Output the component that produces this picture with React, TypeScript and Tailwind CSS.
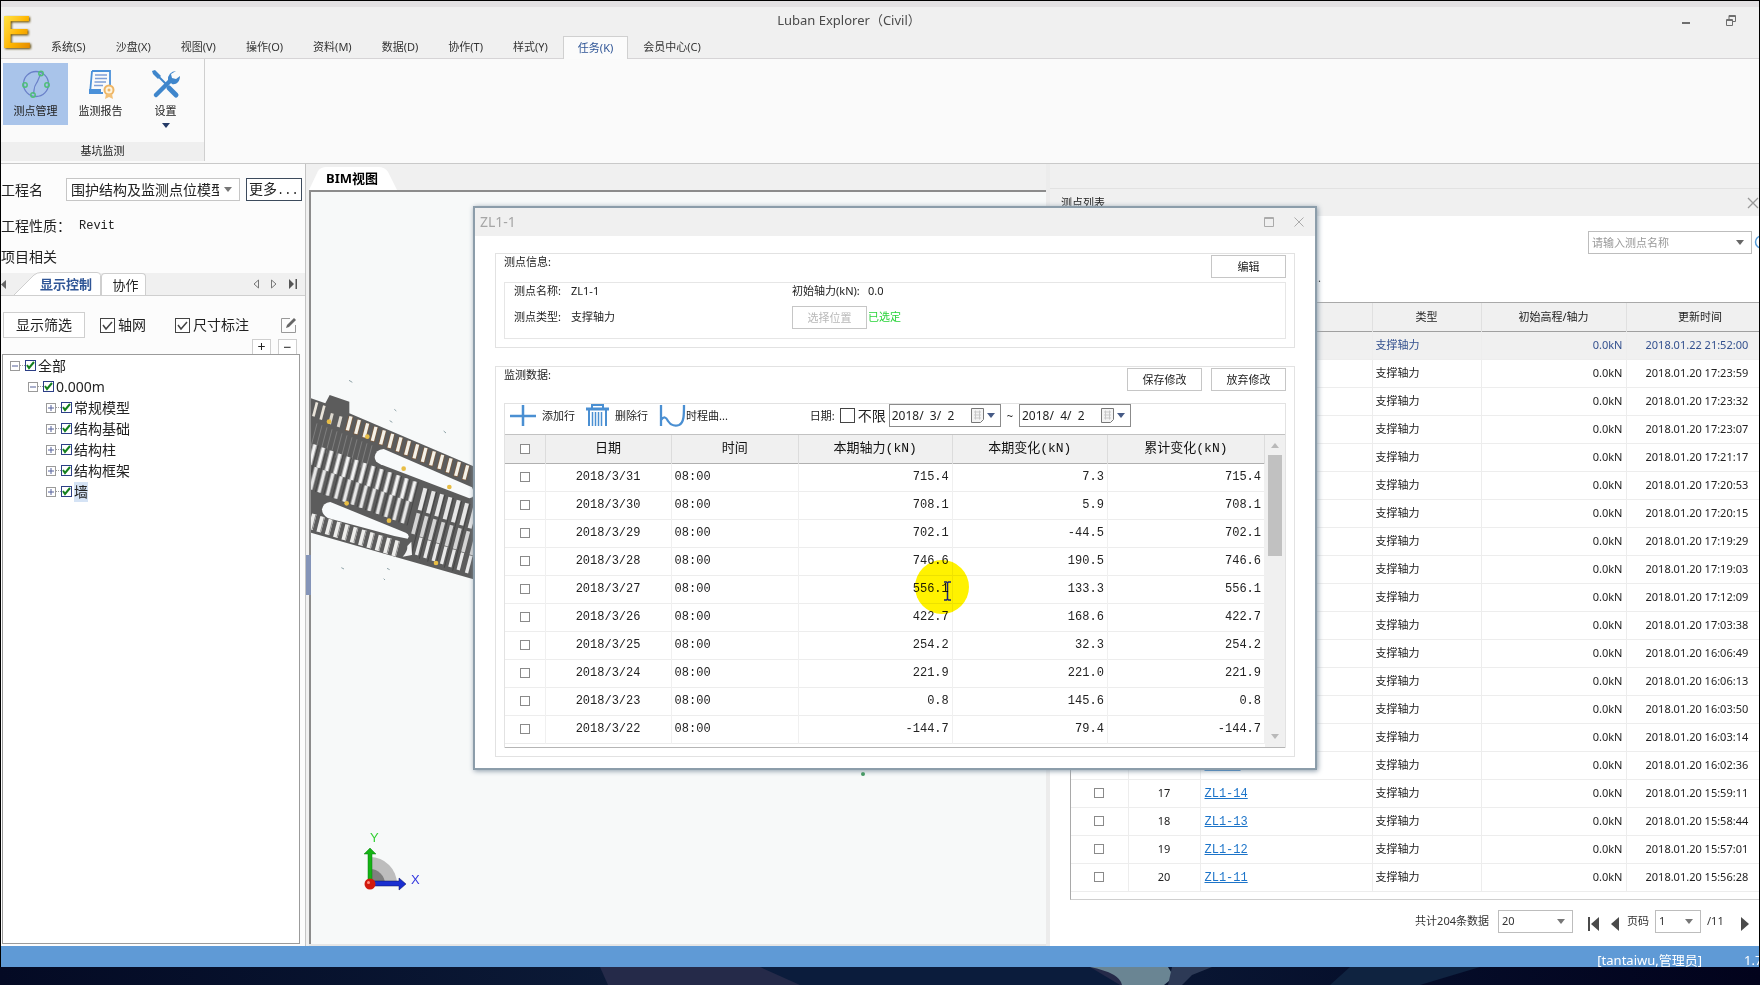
import { useState } from "react";
import type { ReactNode } from "react";

const UI_FONT = "font-['Noto_Sans','Noto_Sans_CJK_SC',sans-serif]";
const SONG_FONT = "font-['Liberation_Mono','Noto_Sans_CJK_SC',monospace]";

const MENU_ITEMS = [
  "系统(S)",
  "沙盘(X)",
  "视图(V)",
  "操作(O)",
  "资料(M)",
  "数据(D)",
  "协作(T)",
  "样式(Y)",
  "任务(K)",
  "会员中心(C)",
];

const TREE_LEAVES = ["常规模型", "结构基础", "结构柱", "结构框架", "墙"];

const READINGS = [
  ["2018/3/31", "08:00", "715.4", "7.3", "715.4"],
  ["2018/3/30", "08:00", "708.1", "5.9", "708.1"],
  ["2018/3/29", "08:00", "702.1", "-44.5", "702.1"],
  ["2018/3/28", "08:00", "746.6", "190.5", "746.6"],
  ["2018/3/27", "08:00", "556.1", "133.3", "556.1"],
  ["2018/3/26", "08:00", "422.7", "168.6", "422.7"],
  ["2018/3/25", "08:00", "254.2", "32.3", "254.2"],
  ["2018/3/24", "08:00", "221.9", "221.0", "221.9"],
  ["2018/3/23", "08:00", "0.8", "145.6", "0.8"],
  ["2018/3/22", "08:00", "-144.7", "79.4", "-144.7"],
];

const POINTS = [
  { name: "ZL1-1", updated: "2018.01.22 21:52:00" },
  { name: "ZL3-6", updated: "2018.01.20 17:23:59" },
  { name: "ZL3-5", updated: "2018.01.20 17:23:32" },
  { name: "ZL3-4", updated: "2018.01.20 17:23:07" },
  { name: "ZL3-3", updated: "2018.01.20 17:21:17" },
  { name: "ZL3-2", updated: "2018.01.20 17:20:53" },
  { name: "ZL3-1", updated: "2018.01.20 17:20:15" },
  { name: "ZL2-6", updated: "2018.01.20 17:19:29" },
  { name: "ZL2-5", updated: "2018.01.20 17:19:03" },
  { name: "ZL2-4", updated: "2018.01.20 17:12:09" },
  { name: "ZL2-3", updated: "2018.01.20 17:03:38" },
  { name: "ZL2-2", updated: "2018.01.20 16:06:49" },
  { name: "ZL2-1", updated: "2018.01.20 16:06:13" },
  { name: "ZL1-4", updated: "2018.01.20 16:03:50" },
  { name: "ZL1-3", updated: "2018.01.20 16:03:14" },
  { name: "ZL1-2", updated: "2018.01.20 16:02:36" },
  { name: "ZL1-14", updated: "2018.01.20 15:59:11" },
  { name: "ZL1-13", updated: "2018.01.20 15:58:44" },
  { name: "ZL1-12", updated: "2018.01.20 15:57:01" },
  { name: "ZL1-11", updated: "2018.01.20 15:56:28" },
];

const Caret = ({ className = "" }: { className?: string }) => (
  <svg viewBox="0 0 8 5" className={`h-[5px] w-2 shrink-0 ${className}`} fill="currentColor">
    <path d="M0 0h8L4 5z" />
  </svg>
);

const CellCheck = ({ label }: { label: string }) => (
  <input
    type="checkbox"
    aria-label={label}
    className="mx-auto block size-[10px] appearance-none border border-[#8a8a8a] bg-white checked:bg-[#5b9bd5]"
  />
);

/* ---------- header and ribbon ---------- */

const TitleBar = () => (
  <header className="flex shrink-0 border-t-[6px] border-b border-t-[#e3e1e3] border-b-[#d6d4d6] bg-[#f0f0f0]">
    <div className="flex w-[35px] shrink-0 pt-[2px]">
      <span className="bg-linear-to-br from-[#fff04a] via-[#ffb800] to-[#d87800] bg-clip-text font-['Liberation_Sans',sans-serif] text-[46px] leading-[46px] font-bold text-transparent drop-shadow-[1px_1px_1px_#5a4300]">
        E
      </span>
    </div>
    <div className="flex min-w-0 flex-1 flex-col">
      <div className="flex h-[26px] items-center">
        <h1 className="flex-1 pl-[6px] text-center text-[13px] text-[#4a4a4a]">Luban Explorer（Civil）</h1>
        <div className="flex w-[103px] items-center gap-[34px] pl-[24px] text-[#6e6e6e]">
          <button aria-label="最小化" className="grid size-[11px] place-items-center">
            <svg viewBox="0 0 8 8" className="size-2">
              <path d="M0 6h8v2H0z" fill="currentColor" />
            </svg>
          </button>
          <button aria-label="还原" className="grid size-[11px] place-items-center">
            <svg viewBox="0 0 10 11" className="h-[11px] w-[10px]" fill="none" stroke="currentColor">
              <path d="M.5 4.500h6v6h-6zM3 4V.5h6.500v6H7M.5 5.500h6M3 1.500h6.500" />
            </svg>
          </button>
        </div>
      </div>
      <nav className="flex h-[25px] items-end">
        {MENU_ITEMS.map((item) => (
          <button
            key={item}
            className={
              item === "任务(K)"
                ? "-mb-px h-[23px] border border-b-0 border-[#d0d0d0] bg-[#fbfbfb] px-[14px] text-[#2f5596]"
                : "h-[23px] px-[15px] text-[#333]"
            }
          >
            {item}
          </button>
        ))}
      </nav>
    </div>
  </header>
);

const PointsIcon = () => (
  <svg viewBox="0 0 30 30" className="size-[30px] shrink-0" fill="none">
    <circle cx="15" cy="15" r="12.500" stroke="#6a80c8" strokeWidth="1.300" />
    <path d="M12 25c2-3 0-6 3-10s2-6 5-10" stroke="#6a80c8" strokeWidth="1.200" />
    <g stroke="#4fbf78" strokeWidth="1.500">
      <circle cx="20" cy="4.500" r="2.200" />
      <circle cx="4" cy="16" r="2.200" />
      <circle cx="26" cy="16" r="2.200" />
      <circle cx="12" cy="26" r="2.200" />
    </g>
  </svg>
);

const ReportIcon = () => (
  <svg viewBox="0 0 30 30" className="size-[30px] shrink-0" fill="none">
    <path d="M6 2h18v17M6 2 4 24h13" stroke="#4a90d9" strokeWidth="1.800" />
    <path d="M3 20h12v5H3z" fill="#4a90d9" />
    <path d="M9 6h12M9 9.500h12M8.500 13H20M8 16.500h9" stroke="#7d9fd8" strokeWidth="1.500" />
    <circle cx="23" cy="21" r="4.500" fill="#fdf3dd" stroke="#eeb565" strokeWidth="2" />
    <circle cx="23" cy="21" r="1.500" fill="#eeb565" />
    <path d="m20 25-1 5 4-2 4 2-1-5z" fill="#f2c077" />
  </svg>
);

const ToolsIcon = () => (
  <svg viewBox="0 0 30 30" className="size-[30px] shrink-0">
    <g fill="none" stroke="#3f86cc" strokeLinecap="round">
      <path d="M19 12 5 26" strokeWidth="4.500" />
      <path d="M6 6l10 10" strokeWidth="2" />
      <path d="m18 19 7 7" strokeWidth="5" />
    </g>
    <path d="M1 2 4 1l6 6-3 3-5-5z" fill="#3f86cc" />
    <path d="M25 2a8 8 0 0 0-8 9l4 4c4 1 8-2 8-8l-4 3-4-1-1-4z" fill="#3f86cc" />
  </svg>
);

const RibbonButton = ({
  icon,
  label,
  active,
  drop,
}: {
  icon: ReactNode;
  label: string;
  active?: boolean;
  drop?: boolean;
}) => (
  <button
    className={`flex h-[62px] w-[65px] flex-col items-center justify-start pt-[6px] leading-4 text-[#222] ${
      active ? "bg-[#a9c4ea]" : ""
    }`}
  >
    {icon}
    <span className="mt-1">{label}</span>
    {drop && <Caret className="mt-1 w-[10px] text-[#243a66]" />}
  </button>
);

const Ribbon = () => (
  <section className="flex h-[105px] shrink-0 border-b border-[#c9c9c9] bg-[#fafafa] pb-[2px]">
    <div className="flex w-[204px] flex-col border-r border-[#cfcfcf]">
      <div className="flex flex-1 pt-1 pl-[2px]">
        <RibbonButton icon={<PointsIcon />} label="测点管理" active />
        <RibbonButton icon={<ReportIcon />} label="监测报告" />
        <RibbonButton icon={<ToolsIcon />} label="设置" drop />
      </div>
      <div className="h-[19px] bg-[#efefef] text-center leading-[18px] text-[#222]">基坑监测</div>
    </div>
  </section>
);

/* ---------- left panel ---------- */

const LabelledCheck = ({ label }: { label: string }) => (
  <label className="flex items-center gap-[3px]">
    <span className="relative grid size-[15px]">
      <input
        type="checkbox"
        defaultChecked
        className="peer size-[15px] appearance-none border border-[#444] bg-white"
      />
      <svg
        viewBox="0 0 15 15"
        className="pointer-events-none absolute inset-0 hidden peer-checked:block"
        fill="none"
        stroke="#444"
        strokeWidth="1.500"
      >
        <path d="m3 7 3 4 6-7" />
      </svg>
    </span>
    {label}
  </label>
);

const TreeRow = ({ label, open, selected }: { label: string; open?: boolean; selected?: boolean }) => (
  <div className="flex h-[21px] items-center">
    <button
      aria-label={open ? `收起${label}` : `展开${label}`}
      className="grid size-[10px] place-items-center border border-[#9a9a9a] bg-white text-[#55619a]"
    >
      <svg viewBox="0 0 8 8" className="size-2" stroke="currentColor">
        <path d={open ? "M1 4h6" : "M1 4h6M4 1v6"} />
      </svg>
    </button>
    <span className="w-[5px] border-t border-dotted border-[#999]" />
    <label className="flex items-center gap-[2px]">
      <span className="relative grid size-[11px]">
        <input
          type="checkbox"
          defaultChecked
          className="peer size-[11px] appearance-none border border-[#2c3f86] bg-white"
        />
        <svg
          viewBox="0 0 11 11"
          className="pointer-events-none absolute inset-0 hidden peer-checked:block"
          fill="none"
          stroke="#15801f"
          strokeWidth="2"
        >
          <path d="m2 5 2 3 5-6" />
        </svg>
      </span>
      <span className={selected ? "bg-[#d5e3f5] leading-5" : "leading-5"}>{label}</span>
    </label>
  </div>
);

const ModelTree = () => (
  <ul className="pl-[7px]">
    <li>
      <TreeRow label="全部" open />
      <ul className="ml-[18px]">
        <li>
          <TreeRow label="0.000m" open />
          <ul className="ml-[18px]">
            {TREE_LEAVES.map((leaf) => (
              <li key={leaf}>
                <TreeRow label={leaf} selected={leaf === "墙"} />
              </li>
            ))}
          </ul>
        </li>
      </ul>
    </li>
  </ul>
);

const ProjectPanel = () => (
  <aside className="flex w-[305px] shrink-0 flex-col border-r border-[#c4c4c4] bg-[#fcfcfc] text-[14px] text-[#222]">
    <div className="mt-[14px] flex h-[23px] items-center">
      <label htmlFor="project" className="w-[65px]">
        工程名
      </label>
      <div className="relative w-[174px]">
        <select
          id="project"
          className="h-[23px] w-full appearance-none overflow-hidden border border-[#c6c6c6] bg-white pr-5 pl-1"
        >
          <option>围护结构及监测点位模型</option>
        </select>
        <Caret className="pointer-events-none absolute top-[9px] right-2 text-[#777]" />
      </div>
      <button className="ml-[6px] h-[23px] w-14 border border-[#3c4a5c] bg-white pl-[2px] text-left whitespace-nowrap">
        更多<span className={`text-[12px] ${SONG_FONT}`}>...</span>
      </button>
    </div>
    <div className="mt-[14px] flex h-[21px] items-center gap-[8px]">
      <span>工程性质：</span>
      <span className={`text-[12px] ${SONG_FONT}`}>Revit</span>
    </div>
    <div className="mt-[10px] h-[21px] leading-[21px]">项目相关</div>
    <div className="mt-[6px] flex h-[23px] items-end border-b border-[#cfcfcf] bg-[#f0f0f0] text-[13px]">
      <button aria-label="首页签" className="self-center text-[#666]">
        <svg viewBox="0 0 5 9" className="h-[9px] w-[5px]" fill="currentColor">
          <path d="M5 0v9L0 4.500z" />
        </svg>
      </button>
      <button className="relative ml-2 h-[23px] w-[87px] pl-[26px] text-left font-bold text-[#2f5596]">
        <svg viewBox="0 0 87 23" className="absolute inset-0 h-[23px] w-[87px]" fill="#fff" stroke="#cfcfcf">
          <path d="M0 23 20 3q3-2.500 7-2.500h56q3.500 0 3.500 3V23" />
        </svg>
        <span className="relative">显示控制</span>
      </button>
      <button className="h-[22px] w-[45px] rounded-t border border-b-0 border-[#cfcfcf] bg-white pl-1">协作</button>
      <div className="ml-auto flex items-center gap-3 self-center pr-2">
        <button aria-label="上一页签">
          <svg viewBox="0 0 6 10" className="h-[10px] w-[6px]" fill="none" stroke="#777">
            <path d="M5.500 1v8L1 5z" />
          </svg>
        </button>
        <button aria-label="下一页签">
          <svg viewBox="0 0 6 10" className="h-[10px] w-[6px]" fill="none" stroke="#777">
            <path d="M.5 1v8L5 5z" />
          </svg>
        </button>
        <button aria-label="末页签">
          <svg viewBox="0 0 8 10" className="h-[10px] w-2" fill="#555">
            <path d="M0 0v10l5-5zM6.500 0H8v10H6.500z" />
          </svg>
        </button>
      </div>
    </div>
    <div className="mt-4 flex h-[26px] items-center pr-2 pl-[2px]">
      <button className="h-[26px] w-[82px] border border-[#cfcfcf] bg-white">显示筛选</button>
      <div className="ml-[15px] flex gap-[29px]">
        <LabelledCheck label="轴网" />
        <LabelledCheck label="尺寸标注" />
      </div>
      <button aria-label="编辑标注" className="ml-auto text-[#666]">
        <svg viewBox="0 0 16 16" className="size-4" fill="none" stroke="currentColor">
          <path d="M9 1.500H.5v14h14V8" stroke="#999" />
          <path d="m5 11 1-3 7-7 2 2-7 7z" fill="currentColor" stroke="none" />
        </svg>
      </button>
    </div>
    <div className="flex h-4 items-end justify-end gap-[7px] pr-2">
      {["+", "−"].map((sign) => (
        <button
          key={sign}
          className="h-[15px] w-[19px] border border-b-0 border-[#cfcfcf] bg-white leading-[14px]"
        >
          {sign}
        </button>
      ))}
    </div>
    <div className="mr-[5px] mb-[2px] ml-[1px] flex-1 border border-[#9b9b9b] bg-white">
      <ModelTree />
    </div>
  </aside>
);

/* ---------- 3D view ---------- */

// One row of struts; x/y is the top end of the first one
const Struts = ({
  x,
  y,
  dx,
  dy,
  count,
  length,
  width,
  color,
}: {
  x: number;
  y: number;
  dx: number;
  dy: number;
  count: number;
  length: number;
  width: number;
  color: string;
}) => {
  const lean = length * 0.26;
  return (
    <g stroke={color} strokeWidth={width}>
      {Array.from({ length: count }, (_, i) => (
        <path key={i} d={`M${x + i * dx} ${y + i * dy}l${-lean} ${length}`} />
      ))}
    </g>
  );
};

const MARKERS = [
  [86, 155],
  [201, 200],
  [310, 296],
  [447, 351],
  [139, 400],
  [266, 452],
  [407, 579],
];

const FoundationPit = () => (
  <svg viewBox="32 0 498 690" className="absolute top-[178px] left-0 h-[230px] w-[166px]">
    <path d="M32 85 75 100 88 75l59 20v35l383 163v338L32 488z" fill="#5c5c5c" />
    <Struts x={50} y={97} dx={22} dy={10} count={2} length={42} width={8} color="#e9e4da" />
    <Struts x={96} y={130} dx={26} dy={9} count={2} length={32} width={9} color="#dcd8d0" />
    <Struts x={152} y={139} dx={25} dy={10.5} count={15} length={44} width={14} color="#7c5a3c" />
    <Struts x={152} y={139} dx={25} dy={10.5} count={15} length={42} width={10} color="#f4f1e8" />
    <Struts x={50} y={160} dx={15} dy={6} count={12} length={72} width={2} color="#8f8f8f" />
    <Struts x={44} y={224} dx={25} dy={9.2} count={13} length={60} width={14} color="#a9a9a9" />
    <Struts x={44} y={224} dx={25} dy={9.2} count={13} length={60} width={8} color="#f2f2f2" />
    <Struts x={54} y={226} dx={25} dy={9.2} count={13} length={130} width={2} color="#3c3c3c" />
    <Struts x={48} y={292} dx={25} dy={9.2} count={12} length={66} width={13} color="#9e9e9e" />
    <Struts x={48} y={292} dx={25} dy={9.2} count={12} length={66} width={8} color="#e6e6e6" />
    <Struts x={375} y={355} dx={25} dy={9} count={7} length={66} width={12} color="#e6e6e6" />
    <Struts x={354} y={430} dx={25} dy={9} count={8} length={62} width={11} color="#d4d4d4" />
    <Struts x={362} y={503} dx={25} dy={9} count={7} length={52} width={10} color="#e9e9e9" />
    <Struts x={384} y={357} dx={25} dy={9} count={6} length={200} width={2} color="#3a3a3a" />
    <Struts x={42} y={432} dx={25} dy={8} count={11} length={46} width={14} color="#eeeeec" />
    <Struts x={47} y={433} dx={25} dy={8} count={11} length={44} width={3} color="#8b8b8b" />
    <path d="M250 237 515 352q14 30-8 33L240 283q-17-8-17-22 3-22 27-24z" fill="#f8fafb" />
    <path d="m90 396 226 92q14 7 6 18l-40-8-200-54q-17-10-17-26 3-20 25-22z" fill="#f8fafb" />
    <path d="m333 515 2 40-28 5q15-15 14-32z" fill="#f3f3f3" />
    <g fill="#e8bd45">
      {MARKERS.map(([cx, cy]) => (
        <circle key={`${cx}-${cy}`} cx={cx} cy={cy} r="7" />
      ))}
    </g>
    <path
      d="m146 31 10 6M282 118l6 5M268 152l8 5M430 183l7 6M123 593l8 4M260 595l8 4M250 626l4 4"
      stroke="#8fa3a8"
      strokeWidth="3"
    />
  </svg>
);

const AxisGizmo = () => (
  <svg viewBox="0 0 64 66" className="absolute bottom-[46px] left-[52px] h-[66px] w-16">
    <path d="M7 52V25a27 27 0 0 1 27 27z" fill="#bdbdbd" />
    <path d="M7 52V37a15 15 0 0 1 15 15z" fill="#7f7f7f" />
    <path d="M5 52V22H1l6-6 6 6H9v30z" fill="#14b414" stroke="#0a7a12" strokeWidth=".5" />
    <path d="M7 49h29v-3l7 6-7 6v-4H7z" fill="#1a2fd0" stroke="#08105c" strokeWidth=".5" />
    <circle cx="7" cy="52" r="5.500" fill="#d21a0e" />
    <circle cx="5.500" cy="50.500" r="1.500" fill="#ff8f80" />
    <text x="7" y="10" fontSize="13" fill="#35d035" fontFamily="Liberation Sans, sans-serif">
      Y
    </text>
    <text x="48" y="52" fontSize="13" fill="#3338e0" fontFamily="Liberation Sans, sans-serif">
      X
    </text>
  </svg>
);

const BimView = () => (
  <main className="relative flex min-w-0 flex-1 flex-col bg-[#f0f0f0] pl-[3px]">
    <div className="flex h-[26px] items-end">
      <button className="relative h-[23px] w-[88px] pr-[2px] pb-[2px] text-[13px] font-bold text-black">
        <svg viewBox="0 0 88 23" className="absolute inset-0 h-[23px] w-[88px]" fill="#fff">
          <path d="M0 23 9 4q3-4 8-4h52q7 0 10 5l9 18z" />
        </svg>
        <span className="relative">BIM视图</span>
      </button>
    </div>
    <div className="relative flex-1 overflow-hidden border-t-2 border-l-2 border-[#8c8c8c] bg-[#f7f9f9]">
      <FoundationPit />
      <AxisGizmo />
      <span className="absolute right-[181px] bottom-[168px] size-1 rounded-full bg-[#3f9a5c]" />
    </div>
    <div className="h-[2px] bg-[#e6e6e6]" />
    {/* splitter grip */}
    <span className="absolute top-[391px] left-0 h-10 w-[5px] bg-[#8494b8]" />
  </main>
);

/* ---------- monitoring point list ---------- */

const PointTable = () => (
  <div className="ml-5 overflow-hidden border-t border-b border-l border-t-[#a9a9a9] border-b-[#cfcfcf] border-l-[#a9a9a9] pb-[7px]">
    <table className="w-[703px] table-fixed border-collapse">
      <colgroup>
        <col className="w-[57px]" />
        <col className="w-[72px]" />
        <col className="w-[172px]" />
        <col className="w-[109px]" />
        <col className="w-[145px]" />
        <col className="w-[148px]" />
      </colgroup>
      <thead>
        <tr className="h-7 border-b border-[#a0a0a0] bg-[#f0f0f0] text-[#222]">
          {["", "序号", "测点名称", "类型", "初始高程/轴力", "更新时间"].map((head) => (
            <th key={head} className="border-r border-[#e0e0e0] p-0 font-normal">
              {head || <CellCheck label="全选测点" />}
            </th>
          ))}
        </tr>
      </thead>
      <tbody>
        {POINTS.map((point, i) => (
          <tr
            key={point.updated}
            className={`h-7 border-b border-[#ededed] *:border-r *:border-[#ededed] *:py-0 ${
              i === 0 ? "bg-[#f0f0f0] text-[#34518f]" : "text-[#222]"
            }`}
          >
            <td className="px-0">
              <CellCheck label={`选择${point.name}`} />
            </td>
            <td className="px-0 text-center">{i + 1}</td>
            <td className="px-1">
              <a href="#" className={`text-[12px] text-[#1c74c9] underline ${SONG_FONT}`}>
                {point.name}
              </a>
            </td>
            <td className="px-[3px]">支撑轴力</td>
            <td className="px-[3px] text-right">0.0kN</td>
            <td className="pr-0 pl-[19px] whitespace-nowrap">{point.updated}</td>
          </tr>
        ))}
      </tbody>
    </table>
  </div>
);

const PageArrow = ({ label, d }: { label: string; d: string }) => (
  <button aria-label={label} className="pt-[6px]">
    <svg viewBox="0 0 11 14" className="h-[14px] w-[11px]" fill="#4a4a4a">
      <path d={d} />
    </svg>
  </button>
);

const Pager = () => (
  <div className="mt-[10px] flex h-[23px] items-center justify-end pr-2 whitespace-nowrap text-[#333]">
    <label htmlFor="page-size">共计204条数据</label>
    <div className="relative ml-[9px] w-[75px]">
      <select id="page-size" className="h-[23px] w-full appearance-none border border-[#bdbdbd] bg-white pl-[3px]">
        <option>20</option>
      </select>
      <Caret className="pointer-events-none absolute top-[9px] right-2 text-[#777]" />
    </div>
    <div className="ml-[15px] flex gap-[10px]">
      <PageArrow label="首页" d="M0 0h2v14H0zM11 0v14L3 7z" />
      <PageArrow label="上一页" d="M10 0v14L2 7z" />
    </div>
    <label htmlFor="page-number" className="ml-[7px]">
      页码
    </label>
    <div className="relative ml-[6px] w-[46px]">
      <select id="page-number" className="h-[23px] w-full appearance-none border border-[#bdbdbd] bg-white pl-[3px]">
        <option>1</option>
      </select>
      <Caret className="pointer-events-none absolute top-[9px] right-2 text-[#777]" />
    </div>
    <span className="ml-[6px] w-[33px]">/11</span>
    <PageArrow label="下一页" d="M1 0v14l8-7z" />
  </div>
);

const PointListPanel = () => (
  <aside className="flex w-[713px] shrink-0 flex-col border-l-4 border-[#ececec] bg-[#f0f0f0] pt-6">
    <div className="flex min-h-0 flex-1 flex-col overflow-hidden bg-white">
      <div className="flex h-7 shrink-0 items-center justify-between border-t border-[#e2e2e2] bg-[#f0f0f0] pl-[11px]">
        <h2>测点列表</h2>
        <button aria-label="关闭测点列表" className="text-[#999]">
          <svg viewBox="0 0 12 12" className="size-3" fill="none" stroke="currentColor" strokeWidth="1.300">
            <path d="m1 1 10 10M11 1 1 11" />
          </svg>
        </button>
      </div>
      <div className="mt-[15px] flex h-[23px] shrink-0 items-center justify-end">
        <div className="relative w-[164px]">
          <input
            type="text"
            aria-label="测点名称"
            placeholder="请输入测点名称"
            className="h-[23px] w-full border border-[#bdbdbd] bg-white px-[3px] placeholder:text-[#999]"
          />
          <Caret className="pointer-events-none absolute top-[9px] right-2 text-[#666]" />
        </div>
        <button aria-label="搜索" className="ml-[2px] w-[5px] overflow-hidden">
          <svg viewBox="0 0 16 16" className="size-4" fill="none" stroke="#5aa0dc" strokeWidth="1.500">
            <circle cx="7.500" cy="7" r="6" />
          </svg>
        </button>
      </div>
      <div className="h-12 shrink-0 pt-4 pl-[207px] text-[#222]">请选择测点...</div>
      <PointTable />
      <Pager />
    </div>
  </aside>
);

/* ---------- point detail window ---------- */

const BoxButton = ({ children, disabled }: { children: ReactNode; disabled?: boolean }) => (
  <button
    disabled={disabled}
    className="h-[23px] w-[75px] border border-[#c6c6c6] bg-white text-[#222] disabled:text-[#b9b9b9]"
  >
    {children}
  </button>
);

const DateField = ({ label, value }: { label: string; value: string }) => (
  <div className="flex h-[23px] w-[112px] items-center border border-[#8b8b8b] bg-white pr-[5px]">
    <input
      type="text"
      aria-label={label}
      defaultValue={value}
      className="w-[78px] min-w-0 bg-transparent pl-[2px] text-[12px] whitespace-pre text-[#222]"
    />
    <button aria-label={`选择${label}`} className="ml-auto flex items-center gap-[3px] text-[#465a86]">
      <svg viewBox="0 0 13 15" className="h-[15px] w-[13px]" fill="#f4f4f4" stroke="#777">
        <path d="M.5.500h12v11l-3 3h-9z" />
        <path d="M3 4h7M3 7h7M3 10h7M4.500 2.500v9M8.500 2.500v9" stroke="#c9c9c9" />
      </svg>
      <Caret />
    </button>
  </div>
);

const ToolButton = ({ icon, label, narrow }: { icon: ReactNode; label: string; narrow?: boolean }) => (
  <button className={`flex items-center text-[#222] ${narrow ? "" : "gap-[6px]"}`}>
    {icon}
    {label}
  </button>
);

const ReadingsTable = () => (
  <div className="flex border-y border-t-[#c2c2c2] border-b-[#b5b5b5]">
    <div className="min-w-0 flex-1 pb-[3px]">
      <table className="w-full table-fixed border-collapse">
        <colgroup>
          <col className="w-[40px]" />
          <col className="w-[126px]" />
          <col className="w-[127px]" />
          <col className="w-[154px]" />
          <col className="w-[155px]" />
          <col className="w-[157px]" />
        </colgroup>
        <thead>
          <tr className={`h-7 border-b border-[#b0b0b0] bg-[#f0f0f0] text-[13px] text-[#111] ${SONG_FONT}`}>
            {["", "日期", "时间", "本期轴力(kN)", "本期变化(kN)", "累计变化(kN)"].map((head) => (
              <th key={head} className="border-r border-[#dcdcdc] p-0 font-normal">
                {head || <CellCheck label="全选数据" />}
              </th>
            ))}
          </tr>
        </thead>
        <tbody>
          {READINGS.map(([date, time, force, change, total]) => (
            <tr
              key={date}
              className={`h-7 border-b border-[#ededed] text-[12px] text-[#222] *:border-r *:border-[#f0f0f0] *:px-[3px] *:py-0 ${SONG_FONT}`}
            >
              <td>
                <CellCheck label={`选择${date}`} />
              </td>
              <td className="text-center">{date}</td>
              <td>{time}</td>
              <td className="text-right">{force}</td>
              <td className="text-right">{change}</td>
              <td className="text-right">{total}</td>
            </tr>
          ))}
        </tbody>
      </table>
    </div>
    <div className="flex w-5 flex-col items-center bg-[#f0f0f0] py-2 text-[#b9b9b9]">
      <Caret className="rotate-180" />
      <div className="mt-[7px] h-[101px] w-[14px] bg-[#c1c1c1]" />
      <Caret className="mt-auto" />
    </div>
  </div>
);

const PointWindow = ({ onClose }: { onClose: () => void }) => (
  <section
    role="dialog"
    aria-label="ZL1-1"
    className="absolute top-[206px] left-[473px] w-[844px] border-2 border-[#8c9daa] bg-white pb-[11px] text-[#222] shadow-[1px_1px_5px_#8a9aa8]"
  >
    <div className="flex h-7 items-center justify-between bg-[#f0f0f0] pr-[11px] pl-[5px]">
      <h2 className="text-[14px] text-[#a6a6a6]">ZL1-1</h2>
      <div className="flex gap-5 text-[#ababab]">
        <button aria-label="最大化">
          <svg viewBox="0 0 10 10" className="size-[10px]" fill="none" stroke="currentColor">
            <path d="M.5.500h9v9h-9zM.5 1.500h9" />
          </svg>
        </button>
        <button aria-label="关闭" onClick={onClose}>
          <svg viewBox="0 0 10 10" className="size-[10px]" fill="none" stroke="currentColor">
            <path d="m.5.500 9 9M9.500.500l-9 9" />
          </svg>
        </button>
      </div>
    </div>

    <div className="mx-5 mt-[17px] border border-[#e2e2e2] px-2 pt-px pb-2">
      <div className="flex h-[27px] justify-between">
        <h3 className="leading-[14px]">测点信息:</h3>
        <BoxButton>编辑</BoxButton>
      </div>
      <div className="grid h-[57px] grid-cols-[57px_221px_76px_1fr] content-start items-center border border-[#e6e6e6] pl-[9px] leading-[15px]">
        <span>测点名称:</span>
        <span>ZL1-1</span>
        <span className="whitespace-nowrap">初始轴力(kN):</span>
        <span>0.0</span>
        <span className="mt-[5px]">测点类型:</span>
        <span className="mt-[5px]">支撑轴力</span>
        <div className="mt-2">
          <BoxButton disabled>选择位置</BoxButton>
        </div>
        <span className="mt-[5px] text-[#2ad43a]">已选定</span>
      </div>
    </div>

    <div className="mx-5 mt-[18px] border border-[#e2e2e2] px-2 pt-px pb-2">
      <div className="flex h-[35px] justify-between">
        <h3 className="leading-[14px]">监测数据:</h3>
        <div className="flex gap-[9px]">
          <BoxButton>保存修改</BoxButton>
          <BoxButton>放弃修改</BoxButton>
        </div>
      </div>
      <div className="border border-[#e2e2e2] border-b-0">
        <div className="flex h-[30px] items-start pl-[5px]">
          <div className="flex h-[23px] items-center gap-[11px]">
            <ToolButton
              label="添加行"
              icon={
                <svg viewBox="0 0 26 23" className="h-[23px] w-[26px]" stroke="#4a8fd2" strokeWidth="2.500">
                  <path d="M13 1v21M0 12h26" />
                </svg>
              }
            />
            <ToolButton
              label="删除行"
              icon={
                <svg viewBox="0 0 23 23" className="h-[23px] w-[23px]" fill="none" stroke="#4a8fd2">
                  <path d="M0 5h23" strokeWidth="3" />
                  <path d="M6 4V1h11v3M3 6v16M20 6v16" strokeWidth="2" />
                  <path d="M6.500 8v14M9.500 8v14M12.500 8v14M15.500 8v14" strokeWidth="1.500" />
                </svg>
              }
            />
            <ToolButton
              narrow
              label="时程曲..."
              icon={
                <svg viewBox="0 0 27 23" className="h-[23px] w-[27px]" fill="none" stroke="#4a8fd2" strokeWidth="2.300">
                  <path d="M2 1v21M2 16c3-4 5-3 7 1 3 5 8 5 11 4 5-2 5-10 5-20" />
                </svg>
              }
            />
          </div>
          <div className="mr-[154px] ml-auto flex h-[23px] items-center">
            <span>日期:</span>
            <label className="ml-[5px] flex items-center gap-[3px] text-[14px]">
              <input type="checkbox" className="size-[15px] appearance-none border border-[#444] bg-white" />
              不限
            </label>
            <div className="ml-[3px] flex items-center gap-[6px]">
              <DateField label="开始日期" value="2018/  3/  2" />
              <span>~</span>
              <DateField label="结束日期" value="2018/  4/  2" />
            </div>
          </div>
        </div>
        <ReadingsTable />
      </div>
    </div>
  </section>
);

const PointerHighlight = () => (
  <div className="pointer-events-none absolute top-[560px] left-[915px] size-[54px] rounded-full bg-[#fff200] mix-blend-multiply">
    <svg viewBox="0 0 9 20" className="absolute top-[21px] left-7 h-5 w-[9px]" fill="none" stroke="#1b2470" strokeWidth="1.500">
      <path d="M1 1h2.500l1 1 1-1H8M1 19h2.500l1-1 1 1H8M4.500 2v16" />
    </svg>
  </div>
);

const Desktop = () => (
  <div className="h-[18px] shrink-0 overflow-hidden bg-linear-to-r from-[#040a24] via-[#10213f] to-[#02031c]">
    <svg viewBox="0 0 1760 18" preserveAspectRatio="none" className="h-full w-full">
      <path d="M600 0h500l40 18H608z" fill="#252a49" />
      <path d="M760 0h330l30 18H800z" fill="#0b1c3c" />
      <path d="M1090 0q30 6 32 18h42l10-8-6-10z" fill="#6a8593" />
      <path d="M1172 0h40l-20 8-10 10h-14z" fill="#2d3a56" />
      <path d="M1350 0h130l-60 18h-90z" fill="#0f2340" />
    </svg>
  </div>
);

export default function App() {
  const [windowOpen, setWindowOpen] = useState(true);

  return (
    <div
      className={`relative flex h-screen min-h-[985px] flex-col overflow-hidden bg-black text-[11px] leading-4 text-[#222] ${UI_FONT}`}
    >
      <div className="flex min-h-0 flex-1 flex-col border-x border-t border-black bg-[#f0f0f0]">
        <TitleBar />
        <Ribbon />
        <div className="flex min-h-0 flex-1">
          <ProjectPanel />
          <BimView />
          <PointListPanel />
        </div>
        <footer className="flex h-[21px] shrink-0 items-center justify-end overflow-hidden bg-[#5f9ad6] pt-[6px] text-[13px] whitespace-nowrap text-white">
          <span>[tantaiwu,管理员]</span>
          <span className="ml-[42px] w-[15px] overflow-hidden">1.7</span>
        </footer>
      </div>
      <Desktop />
      {windowOpen && <PointWindow onClose={() => setWindowOpen(false)} />}
      {windowOpen && <PointerHighlight />}
    </div>
  );
}
